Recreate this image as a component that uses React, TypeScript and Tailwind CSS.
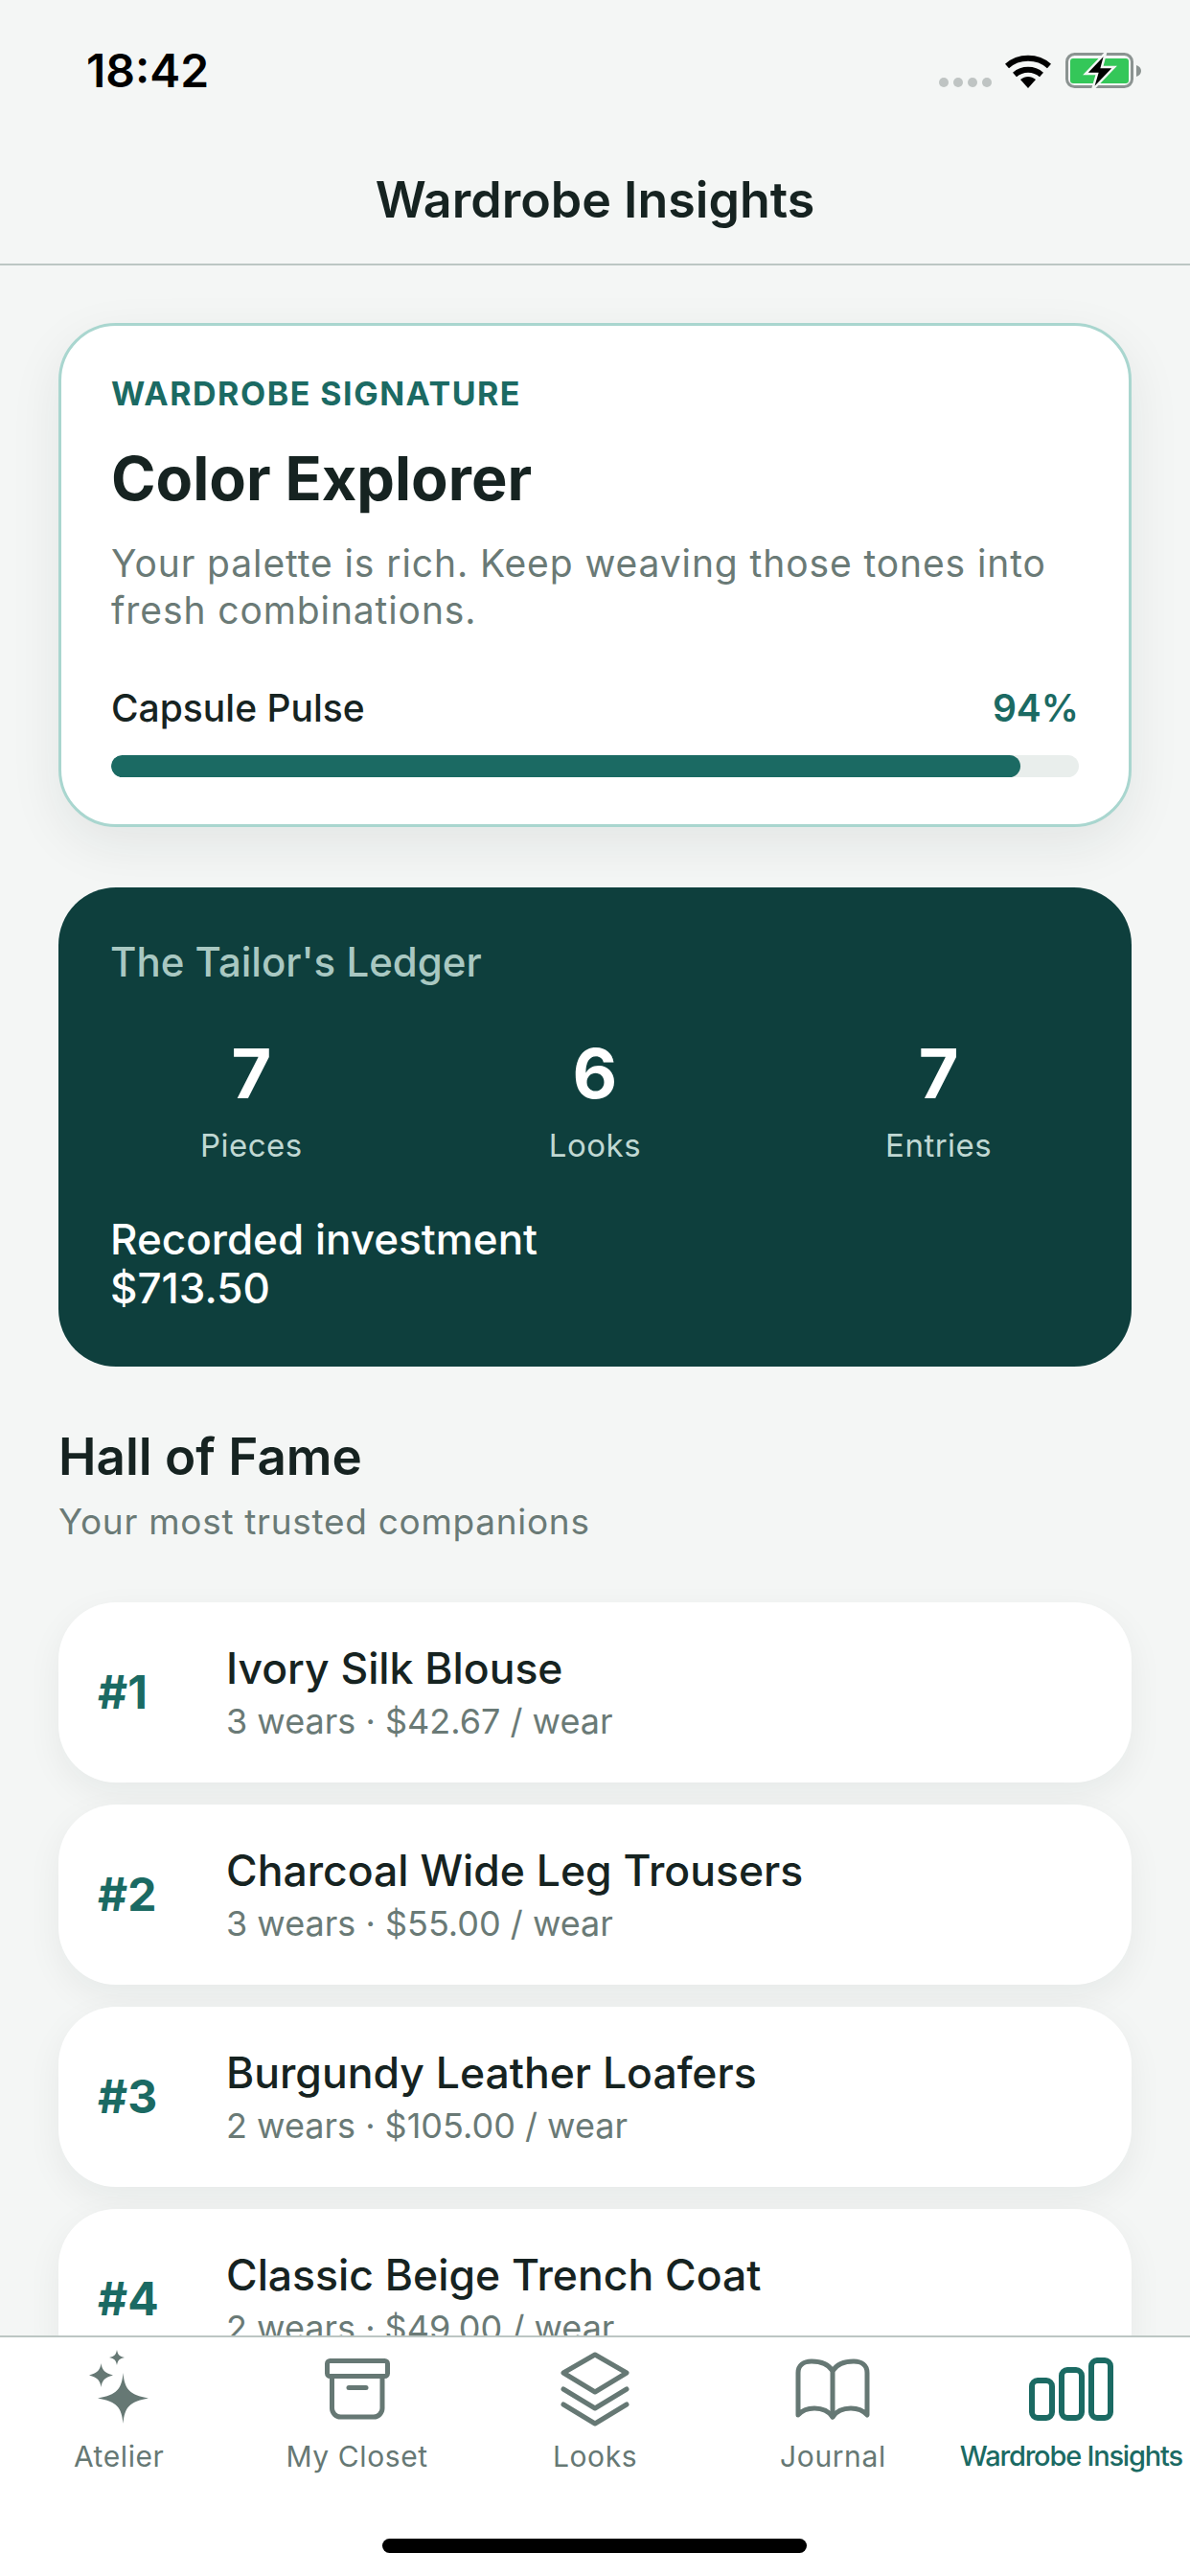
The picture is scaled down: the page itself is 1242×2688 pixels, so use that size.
import React from 'react';

const rows = [
  { rank: '#1', name: 'Ivory Silk Blouse', sub: '3 wears · $42.67 / wear' },
  { rank: '#2', name: 'Charcoal Wide Leg Trousers', sub: '3 wears · $55.00 / wear' },
  { rank: '#3', name: 'Burgundy Leather Loafers', sub: '2 wears · $105.00 / wear' },
  { rank: '#4', name: 'Classic Beige Trench Coat', sub: '2 wears · $49.00 / wear' },
];

const stats = [
  { value: '7', label: 'Pieces' },
  { value: '6', label: 'Looks' },
  { value: '7', label: 'Entries' },
];

const SparkleIcon = () => (
  <svg width="62" height="78" viewBox="0 0 62 78" fill="#667874" className="-mt-[5px]">
    <path d="M35.5 24 C37 41 42 47 62 50.5 C42 54 37 60 35.5 77 C34 60 29 54 9 50.5 C29 47 34 41 35.5 24Z" />
    <path d="M12.5 14 C13.5 21 16 24 25 26.5 C16 29 13.5 32 12.5 39 C11.5 32 9 29 0 26.5 C9 24 11.5 21 12.5 14Z" />
    <path d="M29 0 C30 5 31.5 7 37 8 C31.5 9 30 11 29 16 C28 11 26.5 9 21 8 C26.5 7 28 5 29 0Z" />
  </svg>
);

const BoxIcon = () => (
  <svg width="68" height="64" viewBox="0 0 68 64" fill="none" stroke="#667874" strokeWidth="5" strokeLinecap="round" strokeLinejoin="round">
    <rect x="2.5" y="2.5" width="63" height="16" rx="3" />
    <path d="M7.5 18.5 V52 a9 9 0 0 0 9 9 H51 a9 9 0 0 0 9 -9 V18.5" />
    <path d="M25 30.5 H43" />
  </svg>
);

const LayersIcon = () => (
  <svg width="72" height="78" viewBox="0 0 72 78" fill="none" stroke="#667874" strokeWidth="5" strokeLinecap="round" strokeLinejoin="round">
    <path d="M36 3 L69 22 L36 42 L3 22 Z" />
    <path d="M3 39 L36 59 L69 39" />
    <path d="M3 55 L36 75 L69 55" />
  </svg>
);

const BookIcon = () => (
  <svg width="78" height="64" viewBox="0 0 78 64" fill="none" stroke="#667874" strokeWidth="5" strokeLinecap="round" strokeLinejoin="round">
    <path d="M39 13 C34 5 25 3 17 3 C9 3 3 7 3 15 V59 C8 53 14 52 20 52 C28 52 35 55 39 61 C43 55 50 52 58 52 C64 52 70 53 75 59 V15 C75 7 69 3 61 3 C53 3 44 5 39 13 Z" />
    <path d="M39 13 V61" />
  </svg>
);

const BarsIcon = () => (
  <svg width="88" height="66" viewBox="0 0 88 66" fill="none" stroke="#1b6a63" strokeWidth="6" strokeLinejoin="round">
    <rect x="3" y="24" width="21" height="39" rx="6" />
    <rect x="34" y="13" width="21" height="50" rx="6" />
    <rect x="65" y="3" width="20" height="60" rx="6" />
  </svg>
);

const tabs = [
  { label: 'Atelier', icon: <SparkleIcon /> },
  { label: 'My Closet', icon: <BoxIcon /> },
  { label: 'Looks', icon: <LayersIcon /> },
  { label: 'Journal', icon: <BookIcon /> },
];

const StatusIcons = () => (
  <div className="mt-[7px] flex items-end gap-[14px]">
    <div className="flex gap-[5px] pb-[4px]">
      <span className="w-[10px] h-[10px] rounded-full bg-[#bfc4c3]" />
      <span className="w-[10px] h-[10px] rounded-full bg-[#bfc4c3]" />
      <span className="w-[10px] h-[10px] rounded-full bg-[#bfc4c3]" />
      <span className="w-[10px] h-[10px] rounded-full bg-[#bfc4c3]" />
    </div>
    <svg width="48" height="36" viewBox="0 0 48 36" fill="none" stroke="#000" strokeWidth="6" className="mb-[3px]">
      <path d="M2 13 C14 2 34 2 46 13" />
      <path d="M10 22 C18 15 30 15 38 22" />
      <path d="M16 27 L24 36 L32 27 C27 23 21 23 16 27 Z" fill="#000" stroke="none" />
    </svg>
    <svg width="80" height="40" viewBox="0 0 80 40" className="ml-[1px]">
      <rect x="1.5" y="1.5" width="68" height="34" rx="8" fill="none" stroke="#8b9391" strokeWidth="3" />
      <rect x="5" y="6" width="61" height="26" rx="3" fill="#34c759" />
      <path d="M74 13 c3 1 5 3 5 6 s-2 5 -5 6 Z" fill="#8b9391" />
      <path d="M42 0 L21 22 H33 L28 39 L51 15 H38 Z" fill="#000" stroke="#f4f6f5" strokeWidth="2.5" />
    </svg>
  </div>
);

export default function App() {
  return (
    <div className="relative w-[1242px] h-[2688px] flex flex-col overflow-hidden bg-[#f4f6f5] text-[#162321] font-['Inter',sans-serif]">
      {/* Header */}
      <div className="shrink-0 h-[277px] border-b-[2px] border-[#bcc6c3] flex flex-col">
        <div className="h-[140px] flex items-start justify-between pl-[90px] pr-[50px] pt-[48px]">
          <span className="text-[48px] leading-[52px] font-semibold text-black">18:42</span>
          <StatusIcons />
        </div>
        <div className="h-[135px] pt-[3px] flex items-center justify-center text-[52px] font-semibold">Wardrobe Insights</div>
      </div>

      {/* Scroll content */}
      <div className="flex-1 min-h-0 overflow-hidden px-[61px] pt-[60px]">
        <div className="h-[526px] rounded-[60px] border-[3px] border-[#a9d6cf] bg-white px-[52px] pt-[48px] shadow-[0_18px_54px_rgba(20,40,36,0.08)]">
          <div className="text-[34px] leading-[46px] font-bold tracking-[1.5px] text-[#1b6a63]">WARDROBE SIGNATURE</div>
          <div className="mt-[25px] text-[63px] leading-[80px] font-bold">Color Explorer</div>
          <div className="mt-[24px] text-[39px] leading-[49px] tracking-[0.9px] text-[#6a7a76]">
            Your palette is rich. Keep weaving those tones into fresh combinations.
          </div>
          <div className="mt-[53px] flex items-center justify-between">
            <span className="text-[39px] leading-[50px] font-medium">Capsule Pulse</span>
            <span className="text-[39px] leading-[50px] font-semibold text-[#1b6a63]">94%</span>
          </div>
          <div className="mt-[24px] h-[23px] rounded-full bg-[#e9eeec] overflow-hidden">
            <div className="h-full w-[94%] rounded-full bg-[#1b6a63]" />
          </div>
        </div>

        <div className="mt-[63px] h-[500px] rounded-[60px] bg-[#0e3f3d] px-[54px] pt-[54px] text-white">
          <div className="text-[42px] leading-[48px] font-medium text-[#a9c8c2]">The Tailor's Ledger</div>
          <div className="mt-[49px] grid grid-cols-3 gap-16">
            {stats.map((s) => (
              <div key={s.label} className="flex flex-col items-center">
                <span className="text-[72px] leading-[86px] font-bold">{s.value}</span>
                <span className="mt-[12px] text-[33px] leading-[40px] tracking-[0.5px] text-[#c0d8d3]">{s.label}</span>
              </div>
            ))}
          </div>
          <div className="mt-[53px] text-[44px] leading-[51px] font-medium">
            <div>Recorded investment</div>
            <div>$713.50</div>
          </div>
        </div>

        <div className="mt-[63px] text-[53px] leading-[62px] font-semibold">Hall of Fame</div>
        <div className="mt-[15px] text-[37px] leading-[44px] tracking-[0.7px] text-[#6a7a76]">Your most trusted companions</div>

        <div className="mt-[62px] flex flex-col gap-[23px]">
          {rows.map((r) => (
            <div key={r.rank} className="shrink-0 h-[188px] rounded-[60px] bg-white flex items-center pl-[41px] shadow-[0_12px_36px_rgba(20,40,36,0.06)]">
              <span className="w-[134px] text-[48px] font-bold text-[#1b6a63]">{r.rank}</span>
              <div className="flex flex-col pt-[5px]">
                <span className="text-[44.5px] leading-[52px] font-medium">{r.name}</span>
                <span className="mt-[3px] text-[36px] leading-[52px] text-[#6a7a76]">{r.sub}</span>
              </div>
            </div>
          ))}
        </div>
      </div>

      {/* Tab bar */}
      <div className="shrink-0 h-[251px] border-t-[2px] border-[#bcc6c3] bg-white flex items-start">
        {tabs.map((t) => (
          <div key={t.label} className="flex-1 flex flex-col items-center">
            <div className="h-[96px] mt-[6px] flex items-center">{t.icon}</div>
            <span className="mt-[3px] text-[30px] leading-[38px] tracking-[0.6px] text-[#667874]">{t.label}</span>
          </div>
        ))}
        <div className="flex-1 flex flex-col items-center">
          <div className="h-[96px] mt-[6px] flex items-center"><BarsIcon /></div>
          <span className="mt-[3px] text-[29px] leading-[38px] font-medium tracking-[-1.2px] whitespace-nowrap text-[#1b6a63]">Wardrobe Insights</span>
        </div>
      </div>

      {/* Home indicator */}
      <div className="absolute left-[399px] top-[2649px] w-[443px] h-[15px] rounded-full bg-black" />
    </div>
  );
}
